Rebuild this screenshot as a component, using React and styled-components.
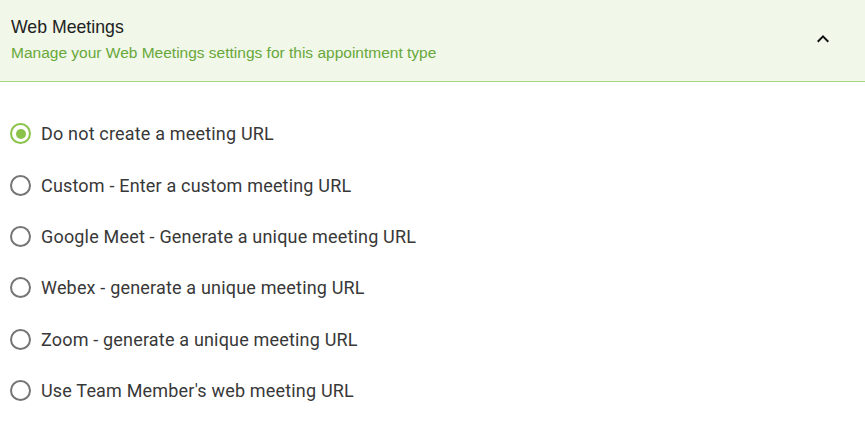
import React, { useState } from "react";
import styled, { createGlobalStyle } from "styled-components";

const Global = createGlobalStyle`
  html, body { margin: 0; padding: 0; background: #fff; }
  * { box-sizing: border-box; }
`;

const Panel = styled.section`
  width: 865px;
  font-family: Roboto, "Liberation Sans", Arial, sans-serif;
`;

const Header = styled.header`
  display: flex;
  align-items: center;
  justify-content: space-between;
  height: 82px;
  padding: 0 30px 0 11px;
  background: #f1f7e9;
  border-bottom: 1px solid #a6d77c;
`;

const Titles = styled.div`
  display: flex;
  flex-direction: column;
  gap: 7px;
  padding-bottom: 2px;
  font-family: "Liberation Sans", Arial, sans-serif;
`;

const Title = styled.div`
  font-size: 17.7px;
  line-height: 20px;
  color: #222;
`;

const Subtitle = styled.div`
  font-size: 15.5px;
  line-height: 18px;
  color: #68a83a;
`;

const Toggle = styled.button`
  display: flex;
  align-items: center;
  justify-content: center;
  width: 24px;
  height: 24px;
  padding: 0;
  border: 0;
  background: none;
  cursor: pointer;
  margin-bottom: 3px;
`;

const Options = styled.div`
  display: flex;
  flex-direction: column;
  padding: 26px 0 0 10px;
`;

const Option = styled.label`
  display: flex;
  align-items: center;
  gap: 10px;
  height: 51.4px;
  cursor: pointer;
  font-size: 18px;
  letter-spacing: 0.18px;
  color: #383838;
`;

const Circle = styled.span`
  position: relative;
  width: 21px;
  height: 21px;
  border-radius: 50%;
  border: 2px solid ${(p) => (p.$checked ? "#8bc34a" : "#757575")};
  flex: none;
  &::after {
    content: "";
    display: ${(p) => (p.$checked ? "block" : "none")};
    position: absolute;
    left: 50%;
    top: 50%;
    width: 10px;
    height: 10px;
    margin: -5px 0 0 -5px;
    border-radius: 50%;
    background: #8bc34a;
  }
`;

const HiddenInput = styled.input`
  display: none;
`;

const options = [
  "Do not create a meeting URL",
  "Custom - Enter a custom meeting URL",
  "Google Meet - Generate a unique meeting URL",
  "Webex - generate a unique meeting URL",
  "Zoom - generate a unique meeting URL",
  "Use Team Member's web meeting URL",
];

export default function App() {
  const [sel, setSel] = useState(0);
  return (
    <>
      <Global />
      <Panel>
        <Header>
          <Titles>
            <Title>Web Meetings</Title>
            <Subtitle>Manage your Web Meetings settings for this appointment type</Subtitle>
          </Titles>
          <Toggle aria-label="collapse">
            <svg width="24" height="24" viewBox="0 0 24 24">
              <path d="M12 8l-6 6 1.41 1.41L12 10.83l4.59 4.58L18 14z" fill="#111" />
            </svg>
          </Toggle>
        </Header>
        <Options>
          {options.map((o, i) => (
            <Option key={o} onClick={() => setSel(i)}>
              <HiddenInput type="radio" name="wm" checked={sel === i} readOnly />
              <Circle $checked={sel === i} />
              {o}
            </Option>
          ))}
        </Options>
      </Panel>
    </>
  );
}
